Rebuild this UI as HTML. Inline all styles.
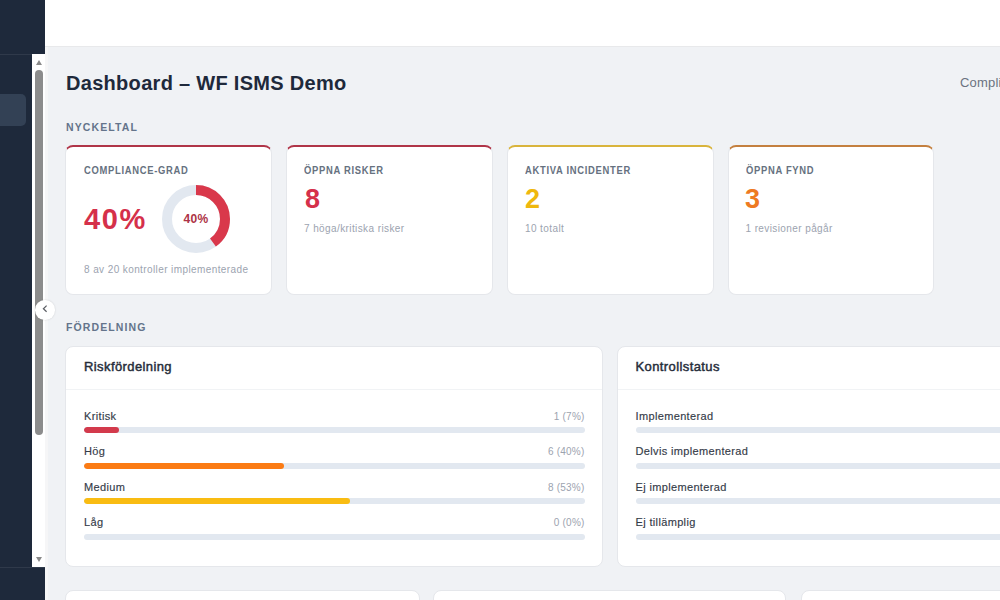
<!DOCTYPE html>
<html><head><meta charset="utf-8">
<style>
*{box-sizing:border-box;margin:0;padding:0}
html,body{width:1000px;height:600px;overflow:hidden}
body{font-family:"Liberation Sans",sans-serif;background:#f0f2f5;position:relative;color:#1e293b}
.side{position:absolute;left:0;top:0;width:45px;height:600px;background:#1e293b}
.side .hdr{position:absolute;left:0;top:0;width:45px;height:55px;border-bottom:1px solid rgba(255,255,255,.08)}
.side .nav{position:absolute;left:0;top:94px;width:25.5px;height:31.5px;background:#334155;border-radius:0 5px 5px 0}
.side .foot{position:absolute;left:0;top:567px;width:45px;height:33px;border-top:1px solid rgba(255,255,255,.08);background:#1e293b}
.sb{position:absolute;left:32px;top:54px;width:13px;height:513px;background:#fff}
.sb2{position:absolute;left:45px;top:47px;width:3px;height:554px;background:#f6f6f7}
.sb .up{position:absolute;left:3.5px;top:5.5px;width:0;height:0;border-left:3px solid transparent;border-right:3px solid transparent;border-bottom:5px solid #8a8a8a}
.sb .dn{position:absolute;left:3.5px;top:503px;width:0;height:0;border-left:3px solid transparent;border-right:3px solid transparent;border-top:5px solid #8a8a8a}
.sb .th{position:absolute;left:3px;top:16px;width:7.5px;height:365px;background:#8c8c8c;border-radius:4px}
.top{position:absolute;left:45px;top:0;width:955px;height:47px;background:#fff;border-bottom:1px solid #e8e9eb}
.toggle{position:absolute;left:35px;top:300px;width:19.5px;height:19.5px;border-radius:50%;background:#fff;box-shadow:0 0 2px rgba(0,0,0,.15)}
.toggle svg{position:absolute;left:5px;top:5px}
.title{position:absolute;left:66px;top:72px;font-size:20px;font-weight:bold;color:#1e293b;white-space:nowrap;letter-spacing:.3px}
.compl{position:absolute;left:960px;top:74.5px;font-size:13px;color:#6b7280;letter-spacing:.2px;white-space:nowrap}
.sec{position:absolute;left:66px;font-size:10.5px;font-weight:bold;color:#64748b;letter-spacing:1.1px;white-space:nowrap}
.kpi{position:absolute;top:145px;width:206.5px;height:150px;background:#fff;border:1px solid #e5e7eb;border-top:2px solid #b03548;border-radius:8px}
.kpi .lab{position:absolute;left:18px;top:18px;font-size:10px;font-weight:bold;color:#667180;letter-spacing:.75px;transform:scaleX(.94);transform-origin:0 0;white-space:nowrap}
.kpi .num{position:absolute;left:18px;top:39px;font-size:27px;font-weight:bold;line-height:1;white-space:nowrap}
.kpi.k2 .lab,.kpi.k2 .sub{margin-left:-1px}
.kpi .sub{position:absolute;left:18px;top:76px;font-size:10px;color:#9ca3af;white-space:nowrap;letter-spacing:.4px}
.panel{position:absolute;top:345.5px;width:538px;height:221px;background:#fff;border:1px solid #e5e7eb;border-radius:8px}
.panel .ph{position:absolute;left:0;top:0;right:0;height:43px;border-bottom:1px solid #f1f3f5}
.panel .pt{position:absolute;left:18px;top:12px;letter-spacing:.4px;font-size:13px;color:#262d3a;-webkit-text-stroke:.45px #262d3a;white-space:nowrap}
.row{position:absolute;left:18px;width:501px;height:30px}
.row .rl{position:absolute;left:0;top:-1.5px;font-size:11px;color:#343b48;-webkit-text-stroke:.15px #343b48;white-space:nowrap;letter-spacing:.35px}
.row .rv{position:absolute;right:0.5px;top:-0.5px;font-size:10px;color:#9ca3af;white-space:nowrap;letter-spacing:.2px}
.row .tr{position:absolute;left:0;top:16px;width:100%;height:6px;border-radius:3px;background:#e2e8f0;overflow:hidden}
.row .fi{position:absolute;left:0;top:0;height:6px;border-radius:3px}
.bot{position:absolute;top:590.3px;width:354px;height:60px;background:#fff;border:1px solid #e5e7eb;border-radius:8px}
</style></head><body>
<div class="side">
  <div class="hdr"></div>
  <div class="nav"></div>
  <div class="foot"></div>
</div>
<div class="top"></div>
<div class="sb2"></div>
<div class="sb"><div class="up"></div><div class="th"></div><div class="dn"></div></div>

<div class="title">Dashboard – WF ISMS Demo</div>
<div class="compl">Compliance</div>

<div class="sec" style="top:121px">NYCKELTAL</div>

<div class="kpi" style="left:65px;border-top-color:#b03548">
  <div class="lab">COMPLIANCE-GRAD</div>
  <div class="num" style="top:57.5px;font-size:29px;color:#d5304a;letter-spacing:1.6px">40%</div>
  <svg style="position:absolute;left:96px;top:37.5px" width="68" height="68" viewBox="0 0 68 68">
    <circle cx="34" cy="34" r="29" fill="none" stroke="#e2e8f0" stroke-width="10"/>
    <circle cx="34" cy="34" r="29" fill="none" stroke="#d9384b" stroke-width="10" stroke-dasharray="72.88 182.2" transform="rotate(-90 34 34)"/>
    <text x="34" y="38.3" text-anchor="middle" font-family="Liberation Sans" font-weight="bold" font-size="12" letter-spacing=".4" fill="#ad3346">40%</text>
  </svg>
  <div class="sub" style="top:117px">8 av 20 kontroller implementerade</div>
</div>
<div class="kpi k2" style="left:286px;border-top-color:#b03548">
  <div class="lab">ÖPPNA RISKER</div>
  <div class="num" style="color:#d5304a">8</div>
  <div class="sub">7 höga/kritiska risker</div>
</div>
<div class="kpi k2" style="left:507px;border-top-color:#d9b43c">
  <div class="lab">AKTIVA INCIDENTER</div>
  <div class="num" style="color:#efb80e;margin-left:-1px">2</div>
  <div class="sub">10 totalt</div>
</div>
<div class="kpi k2" style="left:727.5px;border-top-color:#c4803f">
  <div class="lab">ÖPPNA FYND</div>
  <div class="num" style="color:#ee7a22;margin-left:-1.5px">3</div>
  <div class="sub">1 revisioner pågår</div>
</div>

<div class="sec" style="top:321px">FÖRDELNING</div>

<div class="panel" style="left:65px">
  <div class="ph"><div class="pt">Riskfördelning</div></div>
  <div class="row" style="top:64.5px"><div class="rl">Kritisk</div><div class="rv">1 (7%)</div><div class="tr"><div class="fi" style="width:7%;background:#d33a4c"></div></div></div>
  <div class="row" style="top:100px"><div class="rl">Hög</div><div class="rv">6 (40%)</div><div class="tr"><div class="fi" style="width:40%;background:#fb7b14"></div></div></div>
  <div class="row" style="top:135.5px"><div class="rl">Medium</div><div class="rv">8 (53%)</div><div class="tr"><div class="fi" style="width:53%;background:#f9bc12"></div></div></div>
  <div class="row" style="top:171px"><div class="rl">Låg</div><div class="rv">0 (0%)</div><div class="tr"></div></div>
</div>
<div class="panel" style="left:616.5px">
  <div class="ph"><div class="pt">Kontrollstatus</div></div>
  <div class="row" style="top:64.5px"><div class="rl">Implementerad</div><div class="tr"></div></div>
  <div class="row" style="top:100px"><div class="rl">Delvis implementerad</div><div class="tr"></div></div>
  <div class="row" style="top:135.5px"><div class="rl">Ej implementerad</div><div class="tr"></div></div>
  <div class="row" style="top:171px"><div class="rl">Ej tillämplig</div><div class="tr"></div></div>
</div>

<div class="bot" style="left:65px;width:354.5px"></div>
<div class="bot" style="left:433px;width:353px"></div>
<div class="bot" style="left:800.5px"></div>

<div class="toggle"><svg width="10" height="10" viewBox="0 0 10 10"><path d="M6.6 0.6 L3.4 3.7 L6.6 6.8" fill="none" stroke="#5a5d63" stroke-width="1.2"/></svg></div>
</body></html>
